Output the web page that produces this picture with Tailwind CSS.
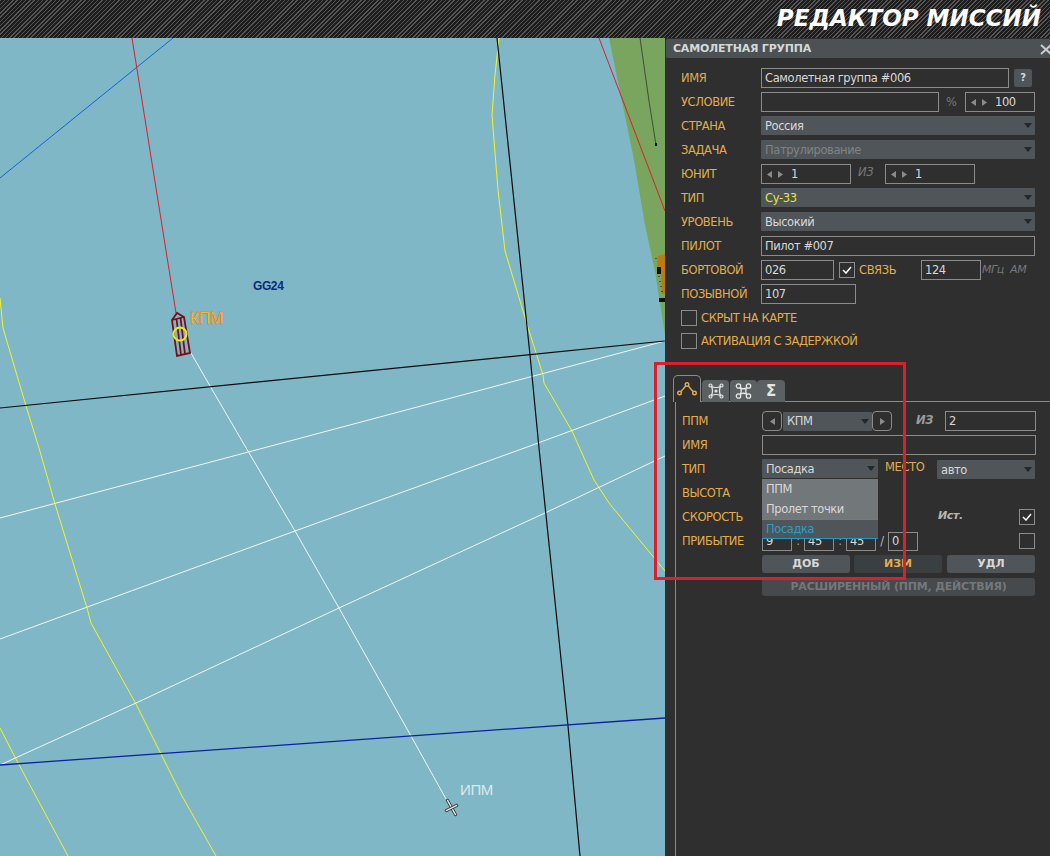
<!DOCTYPE html>
<html lang="ru">
<head>
  <meta charset="UTF-8">
  <meta name="viewport" content="width=device-width, initial-scale=1.0">
  <title>Редактор миссий</title>
  <script src="https://cdn.jsdelivr.net/npm/@tailwindcss/browser@4"></script>
</head>
<body class="relative w-[1050px] h-[856px] overflow-hidden bg-[#2f2f2f] font-['DejaVu_Sans',sans-serif] text-[11.5px] leading-[18px] tracking-[-0.4px] text-[#d8d8d8]">

  <!-- Шапка -->
  <header class="h-[38px] flex items-center justify-end pr-[9px] pb-[3px] bg-[repeating-linear-gradient(135deg,#555_0,#555_1px,#1d1d1d_1px,#1d1d1d_3px)]">
    <h1 class="text-[23px] font-bold italic tracking-normal text-white">РЕДАКТОР МИССИЙ</h1>
  </header>

  <main class="flex h-[818px]">
    <!-- Карта -->
    <div class="w-[665px] h-[818px] bg-[#7fb7c6]">
      <svg width="665" height="818" viewBox="0 38 665 818" fill="none">
        <polygon points="609,38 665,38 665,335 655,271 645,225 634,160" fill="#7aa55e"/>
        <polyline points="640,38 649,101 656,145" stroke="#3f4f3a" stroke-width="1"/>
        <rect x="655" y="143" width="2" height="3" fill="#111"/>
        <polygon points="658,256 665,254 665,294 662,294 661,272 657,266" fill="#b97b12"/>
        <rect x="657" y="267" width="4" height="7" fill="#111"/>
        <rect x="659" y="298" width="6" height="4" fill="#111"/>
        <path d="M656 258v1M659 276v1M660 281v1M661 286v1M662 291v1" stroke="#111"/>

        <polyline points="0,178 173,38" stroke="#1463d8"/>
        <polyline points="132,38 176,313" stroke="#d8202c"/>
        <polyline points="599,38 665,211" stroke="#d8202c"/>

        <polyline points="499,38 495,75 492,115 498,190 505,251 526,321 543,375 544,383 572,431 594,480 609,503 665,571" stroke="#f4f428"/>
        <polyline points="0,298 3,328 26,406 39,448 55,504 87,608 91,623 136,704 161,754 182,796 216,856" stroke="#f4f428"/>
        <polyline points="0,728 17,761 68,856" stroke="#f4f428"/>

        <polyline points="0,518 271,446 665,341" stroke="#f2f6f4"/>
        <polyline points="0,639 295,531 530,446 665,396" stroke="#f2f6f4"/>
        <polyline points="0,765 136,703 339,608 545,513 665,456" stroke="#f2f6f4"/>
        <polyline points="191,353 210,386 245,446 295,531 339,608 411,736 446,799" stroke="#f2f6f4"/>

        <polyline points="497,38 530,355 539,448 568,726 580,856" stroke="#0b0b0b" stroke-width="1.2"/>
        <polyline points="0,408 665,341" stroke="#0b0b0b" stroke-width="1.2"/>
        <polyline points="0,765 665,718" stroke="#0a22a0" stroke-width="1.3"/>

        <!-- КПМ -->
        <g stroke="#7d0d14" stroke-width="1.800">
          <polygon points="172,320 177,313 184,317 190,353 177,356"/>
          <path d="M172 320L184 317M176.500 319L181 355M180.500 318L185 354"/>
        </g>
        <circle cx="180" cy="334" r="6.500" stroke="#f2e818" stroke-width="2"/>
        <text x="190" y="324" font-family="Liberation Sans" font-size="16" fill="#ffe02a" stroke="#e0602a" stroke-width="0.500">КПМ</text>
        <text x="253" y="290" font-family="Liberation Sans" font-size="12" font-weight="700" fill="#0c2a7c">GG24</text>
        <text x="460" y="795" font-family="Liberation Sans" font-size="15" fill="#dce8ee">ИПМ</text>

        <!-- самолет ИПМ -->
        <g stroke="#1a1a1a" stroke-width="0.8" fill="#e6e6e6">
          <path d="M446 800l2-1 9 16-2 1z"/>
          <path d="M445 810l12-6 1 2-12 6z"/>
        </g>
      </svg>
    </div>

    <!-- Панель -->
    <aside class="w-[385px] h-[818px] flex flex-col">
      <div class="h-[19px] mt-px ml-px flex items-center justify-between pl-[7px] pt-px bg-[#4c5254] rounded-l-[2px]">
        <span class="text-[11px] font-bold tracking-[-0.2px] text-[#d5d8d8]">САМОЛЕТНАЯ ГРУППА</span>
        <svg width="11" height="11" viewBox="0 0 11 11" class="-mr-px"><path d="M1 1l10 9M11 1L1 10" stroke="#c8cccc" stroke-width="2"/></svg>
      </div>

      <div class="pl-4 pr-[15px] pt-[10px] flex flex-col gap-1">
        <div class="h-5 flex items-center">
          <span class="w-20 text-[#e3ad4d]">ИМЯ</span>
          <div class="w-[248px] h-5 px-[3px] flex items-center border border-[#8b8b8b]">Самолетная группа #006</div>
          <div class="w-[18px] h-[18px] ml-[5px] flex items-center justify-center rounded-[2px] bg-[#4f5558] text-[10px] font-bold">?</div>
        </div>
        <div class="h-5 flex items-center">
          <span class="w-20 text-[#e3ad4d]">УСЛОВИЕ</span>
          <div class="w-[178px] h-5 border border-[#8b8b8b]"></div>
          <span class="w-[26px] pl-[7px] text-[#77797a]">%</span>
          <div class="w-[70px] h-5 pl-[5px] flex items-center gap-[6px] border border-[#8b8b8b]">
            <svg width="5" height="7" viewBox="0 0 5 7"><path d="M5 0v7L0 3.500z" fill="#8b8b8b"/></svg>
            <svg width="5" height="7" viewBox="0 0 5 7"><path d="M0 0v7l5-3.500z" fill="#8b8b8b"/></svg>
            <span class="ml-[2px]">100</span>
          </div>
        </div>
        <div class="h-5 flex items-center">
          <span class="w-20 text-[#e3ad4d]">СТРАНА</span>
          <div class="w-[274px] h-[19px] self-start pl-1 pr-[3px] flex items-center justify-between bg-[#4f5558] rounded-[1px]">
            <span>Россия</span>
            <svg width="8" height="5" viewBox="0 0 8 5"><path d="M0 0h8L4 5z" fill="#23282a"/></svg>
          </div>
        </div>
        <div class="h-5 flex items-center">
          <span class="w-20 text-[#e3ad4d]">ЗАДАЧА</span>
          <div class="w-[274px] h-[19px] self-start pl-1 pr-[3px] flex items-center justify-between bg-[#4f5558] rounded-[1px]">
            <span class="text-[#7f8486]">Патрулирование</span>
            <svg width="8" height="5" viewBox="0 0 8 5"><path d="M0 0h8L4 5z" fill="#23282a"/></svg>
          </div>
        </div>
        <div class="h-5 flex items-center">
          <span class="w-20 text-[#e3ad4d]">ЮНИТ</span>
          <div class="w-[90px] h-5 pl-[5px] flex items-center gap-[6px] border border-[#8b8b8b]">
            <svg width="5" height="7" viewBox="0 0 5 7"><path d="M5 0v7L0 3.500z" fill="#8b8b8b"/></svg>
            <svg width="5" height="7" viewBox="0 0 5 7"><path d="M0 0v7l5-3.500z" fill="#8b8b8b"/></svg>
            <span class="ml-[2px]">1</span>
          </div>
          <span class="w-[34px] pl-[7px] pb-[4px] italic text-[#77797a]">ИЗ</span>
          <div class="w-[90px] h-5 pl-[5px] flex items-center gap-[6px] border border-[#8b8b8b]">
            <svg width="5" height="7" viewBox="0 0 5 7"><path d="M5 0v7L0 3.500z" fill="#8b8b8b"/></svg>
            <svg width="5" height="7" viewBox="0 0 5 7"><path d="M0 0v7l5-3.500z" fill="#8b8b8b"/></svg>
            <span class="ml-[2px]">1</span>
          </div>
        </div>
        <div class="h-5 flex items-center">
          <span class="w-20 text-[#e3ad4d]">ТИП</span>
          <div class="w-[274px] h-[19px] self-start pl-1 pr-[3px] flex items-center justify-between bg-[#4f5558] rounded-[1px]">
            <span class="text-[#e6e635]">Су-33</span>
            <svg width="8" height="5" viewBox="0 0 8 5"><path d="M0 0h8L4 5z" fill="#23282a"/></svg>
          </div>
        </div>
        <div class="h-5 flex items-center">
          <span class="w-20 text-[#e3ad4d]">УРОВЕНЬ</span>
          <div class="w-[274px] h-[19px] self-start pl-1 pr-[3px] flex items-center justify-between bg-[#4f5558] rounded-[1px]">
            <span>Высокий</span>
            <svg width="8" height="5" viewBox="0 0 8 5"><path d="M0 0h8L4 5z" fill="#23282a"/></svg>
          </div>
        </div>
        <div class="h-5 flex items-center">
          <span class="w-20 text-[#e3ad4d]">ПИЛОТ</span>
          <div class="w-[274px] h-5 px-[3px] flex items-center border border-[#8b8b8b]">Пилот #007</div>
        </div>
        <div class="h-5 flex items-center">
          <span class="w-20 text-[#e3ad4d]">БОРТОВОЙ</span>
          <div class="w-[73px] h-5 px-[3px] flex items-center border border-[#8b8b8b]">026</div>
          <div class="w-4 h-4 ml-[5px] flex items-center justify-center border border-[#8b8b8b]">
            <svg width="10" height="8" viewBox="0 0 10 8"><path d="M1 4l3 3 5-6" stroke="#fff" stroke-width="1.500" fill="none"/></svg>
          </div>
          <span class="w-[66px] pl-1 text-[#e3ad4d]">СВЯЗЬ</span>
          <div class="w-[60px] h-5 px-[3px] flex items-center border border-[#8b8b8b]">124</div>
          <span class="pl-px italic text-[11px] text-[#77797a] whitespace-pre">МГц  АМ</span>
        </div>
        <div class="h-5 flex items-center">
          <span class="w-20 text-[#e3ad4d]">ПОЗЫВНОЙ</span>
          <div class="w-[95px] h-5 px-[3px] flex items-center border border-[#8b8b8b]">107</div>
        </div>
        <div class="h-4 mt-[2px] flex items-center gap-1">
          <div class="w-4 h-4 border border-[#8b8b8b]"></div>
          <span class="text-[#e3ad4d]">СКРЫТ НА КАРТЕ</span>
        </div>
        <div class="h-4 mt-[3px] flex items-center gap-1">
          <div class="w-4 h-4 border border-[#8b8b8b]"></div>
          <span class="text-[#e3ad4d]">АКТИВАЦИЯ С ЗАДЕРЖКОЙ</span>
        </div>
      </div>

      <!-- Вкладки -->
      <div class="mt-[26px] ml-2 h-[27px] flex items-end relative z-10 -mb-px">
        <div class="w-[28px] h-[27px] flex items-center justify-center rounded-t-[5px] border border-b-0 border-[#8b8b8b] bg-[#2f2f2f]">
          <svg width="20" height="14" viewBox="0 0 20 14" fill="none" stroke="#e3ad4d" stroke-width="1.400"><circle cx="2.500" cy="11" r="1.800"/><circle cx="10" cy="2.500" r="1.800"/><circle cx="17.500" cy="11" r="1.800"/><path d="M4 9.500L8.700 4M11.300 4L16 9.500"/></svg>
        </div>
        <div class="w-[27px] h-[22px] ml-px flex items-center justify-center rounded-t-[4px] bg-[#5b6062]">
          <svg width="16" height="16" viewBox="0 0 16 16" fill="none" stroke="#e4e6e6" stroke-width="1.200"><circle cx="2.500" cy="2.500" r="1.500"/><circle cx="13.500" cy="2.500" r="1.500"/><circle cx="2.500" cy="13.500" r="1.500"/><circle cx="13.500" cy="13.500" r="1.500"/><path d="M3.500 3.500Q8 5.500 12.500 3.500Q10.500 8 12.500 12.500Q8 10.500 3.500 12.500Q5.500 8 3.500 3.500z"/><circle cx="8" cy="8" r="1" fill="#e4e6e6"/></svg>
        </div>
        <div class="w-[27px] h-[22px] ml-px flex items-center justify-center rounded-t-[4px] bg-[#5b6062]">
          <svg width="17" height="16" viewBox="0 0 17 16" fill="none" stroke="#e4e6e6" stroke-width="1.300"><circle cx="3.500" cy="3" r="2.200"/><circle cx="13.500" cy="3" r="2.200"/><circle cx="3.500" cy="13" r="2.200"/><circle cx="13.500" cy="13" r="2.200"/><path d="M5 4.500Q8.500 7 12 4.500Q9.500 8 12 11.500Q8.500 9 5 11.500Q7.500 8 5 4.500z"/></svg>
        </div>
        <div class="w-[28px] h-[22px] flex items-center justify-center rounded-t-[4px] bg-[#5b6062] text-[15px] font-bold tracking-normal text-[#e4e6e6]">Σ</div>
      </div>

      <!-- Маршрут -->
      <div class="ml-[10px] flex-1 pl-[6px] pr-[14px] pt-[9px] border-l border-t border-[#8b8b8b] flex flex-col gap-1">
        <div class="h-5 flex items-center">
          <span class="w-20 text-[#e3ad4d]">ППМ</span>
          <div class="w-5 h-5 flex items-center justify-center rounded-[4px] border border-[#8b8b8b]">
            <svg width="5" height="7" viewBox="0 0 5 7"><path d="M5 0v7L0 3.500z" fill="#8b8b8b"/></svg>
          </div>
          <div class="w-[89px] h-[19px] ml-px pl-1 pr-[3px] flex items-center justify-between bg-[#4f5558] rounded-[1px]">
            <span>КПМ</span>
            <svg width="8" height="5" viewBox="0 0 8 5"><path d="M0 0h8L4 5z" fill="#23282a"/></svg>
          </div>
          <div class="w-5 h-5 flex items-center justify-center rounded-[4px] border border-[#8b8b8b]">
            <svg width="5" height="7" viewBox="0 0 5 7"><path d="M0 0v7l5-3.500z" fill="#8b8b8b"/></svg>
          </div>
          <span class="w-[53px] pl-[24px] pb-[3px] font-bold italic text-[#9a9c9c]">ИЗ</span>
          <div class="w-[91px] h-5 px-[3px] flex items-center border border-[#8b8b8b]">2</div>
        </div>
        <div class="h-5 flex items-center">
          <span class="w-20 text-[#e3ad4d]">ИМЯ</span>
          <div class="w-[274px] h-5 border border-[#8b8b8b]"></div>
        </div>
        <div class="h-5 flex items-start relative z-20">
          <span class="w-20 h-5 leading-5 text-[#e3ad4d]">ТИП</span>
          <div class="relative w-[116px] h-[19px] pl-1 pr-[3px] flex items-center justify-between bg-[#4f5558] rounded-[1px]">
            <span>Посадка</span>
            <svg width="8" height="5" viewBox="0 0 8 5"><path d="M0 0h8L4 5z" fill="#23282a"/></svg>
            <!-- выпадающий список -->
            <div class="absolute left-0 top-5 w-[116px] h-[60px] flex flex-col bg-[#72777a]">
              <span class="h-5 pl-1 leading-5">ППМ</span>
              <span class="h-5 pl-1 leading-5">Пролет точки</span>
              <span class="h-5 pl-1 leading-[18px] bg-[#4f5558] border-y border-[#1b9ac4] text-[#2a9fc9]">Посадка</span>
            </div>
          </div>
          <span class="w-[59px] pl-[7px] h-5 leading-4 text-[#e3ad4d]">МЕСТО</span>
          <div class="w-[98px] h-[19px] mt-px pl-1 pr-[3px] flex items-center justify-between bg-[#4f5558] rounded-[1px]">
            <span>авто</span>
            <svg width="8" height="5" viewBox="0 0 8 5"><path d="M0 0h8L4 5z" fill="#23282a"/></svg>
          </div>
        </div>
        <div class="h-5 flex items-center">
          <span class="w-20 text-[#e3ad4d]">ВЫСОТА</span>
        </div>
        <div class="h-5 flex items-center">
          <span class="w-[256px] text-[#e3ad4d]">СКОРОСТЬ</span>
          <span class="w-[81px] font-bold italic text-[11px] text-[#b4b6b6] pb-[3px]">Ист.</span>
          <div class="w-4 h-4 flex items-center justify-center border border-[#8b8b8b]">
            <svg width="10" height="8" viewBox="0 0 10 8"><path d="M1 4l3 3 5-6" stroke="#fff" stroke-width="1.500" fill="none"/></svg>
          </div>
        </div>
        <div class="h-5 flex items-center">
          <span class="w-20 text-[#e3ad4d]">ПРИБЫТИЕ</span>
          <div class="w-[30px] h-[19px] px-[3px] flex items-center border border-[#8b8b8b]">9</div>
          <span class="w-3 text-center text-[#9a9c9c]">:</span>
          <div class="w-[30px] h-[19px] px-[3px] flex items-center border border-[#8b8b8b]">45</div>
          <span class="w-3 text-center text-[#9a9c9c]">:</span>
          <div class="w-[30px] h-[19px] px-[3px] flex items-center border border-[#8b8b8b]">45</div>
          <span class="w-3 text-center text-[#b4b6b6]">/</span>
          <div class="w-[30px] h-[19px] px-[3px] flex items-center border border-[#8b8b8b]">0</div>
          <div class="w-4 h-4 ml-auto mr-px border border-[#8b8b8b]"></div>
        </div>
        <div class="h-[18px] ml-20 flex gap-1 text-[11px] font-bold tracking-normal">
          <div class="w-[88px] flex items-center justify-center rounded-[3px] bg-[#4f5558]">ДОБ</div>
          <div class="w-[88px] flex items-center justify-center rounded-[3px] bg-[#3a3f41] text-[#e3ad4d]">ИЗМ</div>
          <div class="w-[88px] ml-px flex items-center justify-center rounded-[3px] bg-[#4f5558]">УДЛ</div>
        </div>
        <div class="h-[18px] w-[273px] ml-20 mt-px flex items-center justify-center rounded-[3px] bg-[#464a4c] text-[11px] font-bold tracking-[-0.2px] text-[#74787a]">РАСШИРЕННЫЙ (ППМ, ДЕЙСТВИЯ)</div>
      </div>
    </aside>
  </main>

  <!-- Красная рамка поверх экрана -->
  <div class="absolute left-[654px] top-[362px] w-[252px] h-[218px] border-[3px] border-[#d8202e] z-30"></div>
</body>
</html>
